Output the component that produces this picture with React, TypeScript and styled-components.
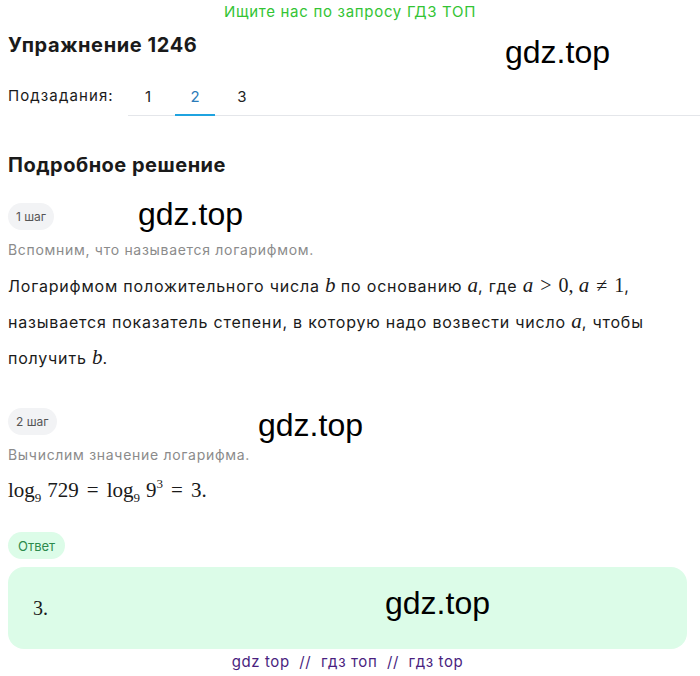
import React from 'react';
import styled, { createGlobalStyle } from 'styled-components';

const GlobalStyle = createGlobalStyle`
  body {
    margin: 0;
    background: #ffffff;
    font-family: Inter, "Noto Sans", sans-serif;
    color: #1a1a1a;
  }
`;

const Page = styled.div`
  position: relative;
  width: 700px;
  height: 676px;
  overflow: hidden;
  box-sizing: border-box;
  padding: 0 13px 0 8px;
`;

const Banner = styled.div`
  text-align: center;
  color: #33c434;
  font-size: 15px;
  line-height: 22px;
  letter-spacing: 0.7px;
  margin: 1px 0 0 5px;
`;

const Title = styled.h1`
  margin: 9px 0 0;
  font-size: 20px;
  line-height: 26px;
  font-weight: 700;
  letter-spacing: 0.6px;
`;

const SubRow = styled.div`
  display: flex;
  align-items: flex-end;
  margin-top: 28px;
`;

const SubLabel = styled.span`
  font-size: 15px;
  line-height: 20px;
  letter-spacing: 1.1px;
  padding-bottom: 10px;
  width: 120px;
`;

const Tabs = styled.div`
  flex: 1;
  display: flex;
  gap: 7px;
  border-bottom: 1px solid #e4e6ea;
  margin-right: -13px;
`;

const Tab = styled.div<{ $active?: boolean }>`
  width: 40px;
  text-align: center;
  font-size: 15px;
  line-height: 20px;
  padding-bottom: 7px;
  color: ${(p) => (p.$active ? '#2b7bb9' : '#222')};
  border-bottom: 2px solid ${(p) => (p.$active ? '#1fa3e0' : 'transparent')};
  margin-bottom: -1px;
`;

const SectionTitle = styled.h2`
  margin: 36px 0 0;
  font-size: 20px;
  line-height: 26px;
  font-weight: 700;
  letter-spacing: 0.5px;
`;

const Pill = styled.div<{ $answer?: boolean }>`
  display: inline-flex;
  align-items: center;
  height: 27px;
  padding: 0 ${(p) => (p.$answer ? '10px' : '8px')};
  border-radius: 14px;
  font-size: ${(p) => (p.$answer ? '13px' : '12px')};
  background: ${(p) => (p.$answer ? '#dcfce8' : '#f2f3f5')};
  color: ${(p) => (p.$answer ? '#2c8a4d' : '#555')};
`;

const Step = styled.div<{ $top: number }>`
  margin-top: ${(p) => p.$top}px;
  display: flex;
  flex-direction: column;
  align-items: flex-start;
`;

const Hint = styled.div`
  margin-top: 10px;
  font-size: 14px;
  line-height: 20px;
  letter-spacing: 0.7px;
  color: #8b8b8b;
`;

const Text = styled.p`
  margin: 8px 0 0;
  font-size: 16px;
  line-height: 35px;
  letter-spacing: 0.8px;
  white-space: nowrap;
`;

const M = styled.span`
  font-family: "Liberation Serif", "DejaVu Serif", serif;
  font-style: italic;
  font-size: 21px;
  letter-spacing: 0;
`;

const Op = styled.span`
  font-family: "Liberation Serif", "DejaVu Serif", serif;
  font-size: 20px;
  letter-spacing: 0;
  margin: 0 7px;
`;

const Num = styled.span`
  font-family: "Liberation Serif", "DejaVu Serif", serif;
  font-size: 20px;
  letter-spacing: 0;
`;

const Formula = styled.div`
  margin-top: 10px;
  font-family: "Liberation Serif", "DejaVu Serif", serif;
  font-size: 21px;
  line-height: 30px;
  white-space: nowrap;
`;

const Eq = styled.span`
  margin: 0 8px;
`;

const Sub = styled.sub`
  font-size: 13px;
  vertical-align: -5px;
  line-height: 0;
  margin-right: 6px;
`;

const Sup = styled.sup`
  font-size: 13px;
  vertical-align: 9px;
  line-height: 0;
`;

const AnswerBox = styled.div`
  margin-top: 8px;
  height: 82px;
  border-radius: 16px;
  background: #dcfce8;
  display: flex;
  align-items: center;
  padding-left: 25px;
  font-family: "Liberation Serif", "DejaVu Serif", serif;
  font-size: 20px;
`;

const Footer = styled.div`
  text-align: center;
  margin-top: 3px;
  color: #4a1f80;
  font-size: 15px;
  line-height: 20px;
  letter-spacing: 0.6px;
`;

const Mark = styled.div<{ $x: number; $y: number }>`
  position: absolute;
  left: ${(p) => p.$x}px;
  top: ${(p) => p.$y}px;
  font-family: "Liberation Sans", Arial, sans-serif;
  font-size: 32px;
  line-height: 34px;
  color: #000;
  pointer-events: none;
`;

export default function App() {
  return (
    <Page>
      <GlobalStyle />
      <Banner>Ищите нас по запросу ГДЗ ТОП</Banner>
      <Title>Упражнение 1246</Title>
      <SubRow>
        <SubLabel>Подзадания:</SubLabel>
        <Tabs>
          <Tab>1</Tab>
          <Tab $active>2</Tab>
          <Tab>3</Tab>
        </Tabs>
      </SubRow>
      <SectionTitle>Подробное решение</SectionTitle>
      <Step $top={25}>
        <Pill>1 шаг</Pill>
        <Hint>Вспомним, что называется логарифмом.</Hint>
      </Step>
      <Text>
        Логарифмом положительного числа <M>b</M> по основанию <M>a</M>, где <M>a</M>
        <Op>&gt;</Op>
        <Num>0,</Num> <M>a</M>
        <Op>≠</Op>
        <Num>1</Num>,
        <br />
        называется показатель степени, в которую надо возвести число <M>a</M>, чтобы
        <br />
        получить <M>b</M>.
      </Text>
      <Step $top={32}>
        <Pill>2 шаг</Pill>
        <Hint>Вычислим значение логарифма.</Hint>
      </Step>
      <Formula>
        log<Sub>9</Sub>729<Eq>=</Eq>log<Sub>9</Sub>9<Sup>3</Sup>
        <Eq>=</Eq>3.
      </Formula>
      <Step $top={27}>
        <Pill $answer>Ответ</Pill>
      </Step>
      <AnswerBox>3.</AnswerBox>
      <Footer>gdz top&nbsp; //&nbsp; гдз топ&nbsp; //&nbsp; гдз top</Footer>
      <Mark $x={505} $y={35}>gdz.top</Mark>
      <Mark $x={138} $y={197}>gdz.top</Mark>
      <Mark $x={258} $y={408}>gdz.top</Mark>
      <Mark $x={385} $y={586}>gdz.top</Mark>
    </Page>
  );
}
